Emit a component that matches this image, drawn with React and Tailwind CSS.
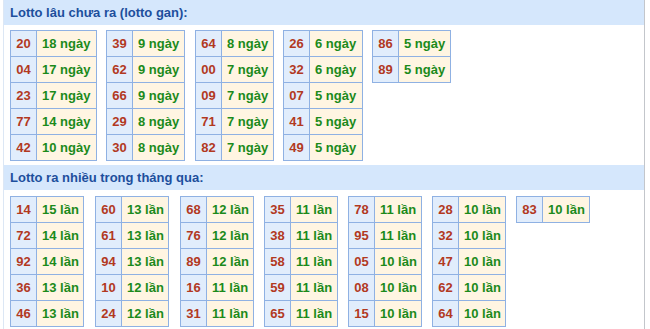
import React from "react";

const gan = [
  [["20", "18 ngày"], ["04", "17 ngày"], ["23", "17 ngày"], ["77", "14 ngày"], ["42", "10 ngày"]],
  [["39", "9 ngày"], ["62", "9 ngày"], ["66", "9 ngày"], ["29", "8 ngày"], ["30", "8 ngày"]],
  [["64", "8 ngày"], ["00", "7 ngày"], ["09", "7 ngày"], ["71", "7 ngày"], ["82", "7 ngày"]],
  [["26", "6 ngày"], ["32", "6 ngày"], ["07", "5 ngày"], ["41", "5 ngày"], ["49", "5 ngày"]],
  [["86", "5 ngày"], ["89", "5 ngày"]],
];
const ganW = ["w-[60px]", "w-[52px]", "w-[52px]", "w-[53px]", "w-[52px]"];
const ganMl = ["", "ml-[9px]", "ml-[10px]", "ml-[9px]", "ml-[9px]"];

const nhieu = [
  [["14", "15 lần"], ["72", "14 lần"], ["92", "14 lần"], ["36", "13 lần"], ["46", "13 lần"]],
  [["60", "13 lần"], ["61", "13 lần"], ["94", "13 lần"], ["10", "12 lần"], ["24", "12 lần"]],
  [["68", "12 lần"], ["76", "12 lần"], ["89", "12 lần"], ["16", "11 lần"], ["31", "11 lần"]],
  [["35", "11 lần"], ["38", "11 lần"], ["58", "11 lần"], ["59", "11 lần"], ["65", "11 lần"]],
  [["78", "11 lần"], ["95", "11 lần"], ["05", "10 lần"], ["08", "10 lần"], ["15", "10 lần"]],
  [["28", "10 lần"], ["32", "10 lần"], ["47", "10 lần"], ["62", "10 lần"], ["64", "10 lần"]],
  [["83", "10 lần"]],
];
const nhieuMl = ["", "ml-[11px]", "ml-[11px]", "ml-[10px]", "ml-[10px]", "ml-[10px]", "ml-[10px]"];

function Table({ rows, w, ml }) {
  return (
    <div className={`flex flex-col self-start border-l border-t border-[#8fb1e3] ${ml}`}>
      {rows.map(([n, t], i) => (
        <div key={i} className="flex h-[26px]">
          <div className="flex w-[26px] items-center justify-center border-r border-b border-[#8fb1e3] bg-[#e1edfc] text-[#b2391f]">
            {n}
          </div>
          <div className={`flex ${w} items-center pl-[5px] border-r border-b border-[#8fb1e3] bg-[#fff5e2] text-[#1b8a1b] whitespace-nowrap`}>
            {t}
          </div>
        </div>
      ))}
    </div>
  );
}

export default function App() {
  return (
    <div
      className="w-[650px] h-[329px] overflow-hidden bg-white text-[13px] font-bold"
      style={{ fontFamily: '"Liberation Sans", Arial, sans-serif' }}
    >
      <div className="ml-[3px] w-[642px] h-[340px] border-l border-r border-l-[#dce7f5] border-r-[#c3c6cb]">
        <div className="h-[25px] bg-[#d5e7fc] pl-[6px] flex items-center text-[#1d4f9d]">
          Lotto lâu chưa ra (lotto gan):
        </div>
        <div className="flex mt-[5px] pl-[6px]">
          {gan.map((rows, i) => (
            <Table key={i} rows={rows} w={ganW[i]} ml={ganMl[i]} />
          ))}
        </div>
        <div className="mt-[4px] h-[25px] bg-[#d5e7fc] pl-[6px] flex items-center text-[#1d4f9d]">
          Lotto ra nhiều trong tháng qua:
        </div>
        <div className="flex mt-[6px] pl-[6px]">
          {nhieu.map((rows, i) => (
            <Table key={i} rows={rows} w="w-[47px]" ml={nhieuMl[i]} />
          ))}
        </div>
      </div>
    </div>
  );
}
